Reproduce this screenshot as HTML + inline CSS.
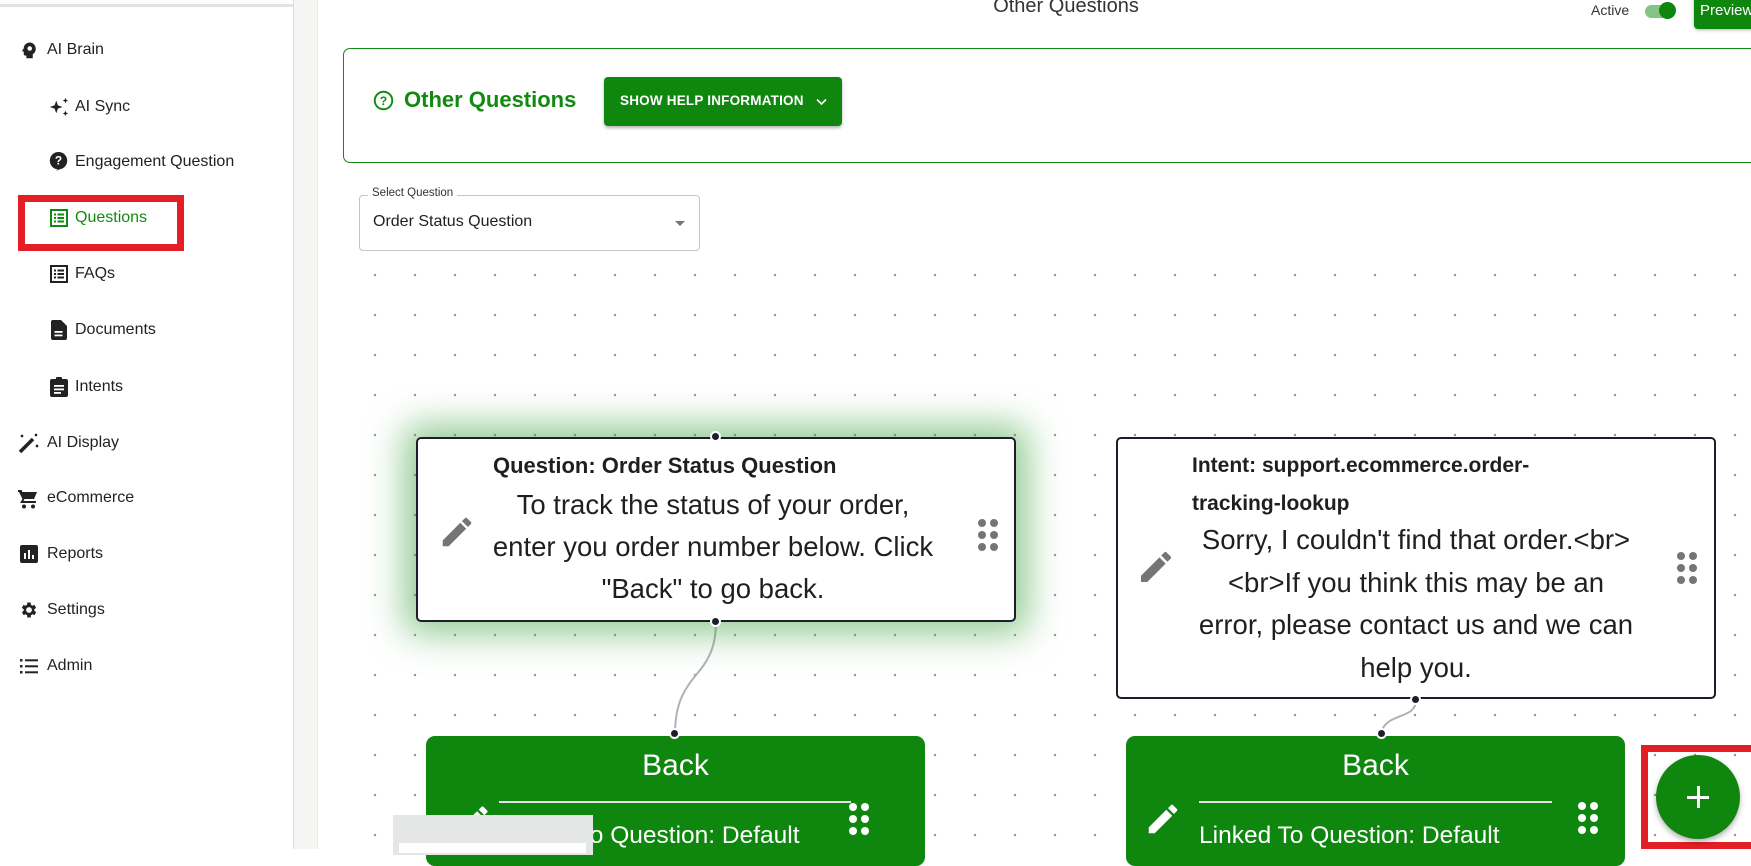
<!DOCTYPE html>
<html><head><meta charset="utf-8"><style>
*{box-sizing:border-box;margin:0;padding:0}
body{width:1751px;height:849px;overflow:hidden;background:#fff;font-family:"Liberation Sans",Arial,sans-serif;color:#1f1f1f;position:relative}
.abs{position:absolute}
#side{left:0;top:0;width:294px;height:849px;background:#fff;border-right:1px solid #ddd}
#gap{left:294px;top:0;width:24px;height:849px;background:#f5f5f4;border-right:1px solid #e8e8e8}
.nav{position:absolute;font-size:16px;color:#222;display:flex;align-items:center;height:20px}
.nav svg{position:absolute}
.grid{left:360px;top:260px;width:1391px;height:589px;background-image:radial-gradient(circle,#999 1.1px,transparent 1.4px);background-size:40px 40px;background-position:-5px -5px}
.node{position:absolute;background:#fff;border:2px solid #1d1d2b;border-radius:5px}
.handle{position:absolute;width:11px;height:11px;border-radius:50%;background:#1d1d2b;border:2px solid #fff}
.gn{position:absolute;background:#0f870f;border-radius:9px;color:#fff}
.dots{position:absolute;display:grid;grid-template-columns:8px 8px;gap:4px 4px}
.dots i{display:block;width:8px;height:8px;border-radius:50%;background:#757575}
.gn .dots i{background:#fff}
</style></head><body>
<div id="side" class="abs">
  <div class="abs" style="left:0;top:4px;width:294px;height:3px;background:#e2e2e2"></div>
</div>
<div id="gap" class="abs"></div>

<!-- nav -->
<div class="nav" style="left:20px;top:40px">
<svg width="18" height="20" viewBox="0 0 24 24" style="left:0;top:0"><path fill="#222" d="M13 2C8.6 2 5.1 5.4 5 9.6L3 12.8c-.3.5 0 1.2.6 1.2H5v3.5c0 1.1.9 2 2 2h1.5V23h8.5v-5.5c2.6-1.3 4-4 4-7 0-4.6-3.4-8.5-8-8.5z"/><circle cx="13" cy="10" r="3" fill="#fff"/></svg>
<span style="margin-left:27px">AI Brain</span></div>
<div class="nav" style="left:48px;top:97px">
<svg width="22" height="22" viewBox="0 0 24 24" style="left:0;top:-1px"><path fill="#222" d="M9 5l1.8 5.2L16 12l-5.2 1.8L9 19l-1.8-5.2L2 12l5.2-1.8zM19 2l.9 2.1L22 5l-2.1.9L19 8l-.9-2.1L16 5l2.1-.9zM19 16l.9 2.1L22 19l-2.1.9L19 22l-.9-2.1L16 19l2.1-.9z"/></svg>
<span style="margin-left:27px">AI Sync</span></div>
<div class="nav" style="left:49px;top:152px">
<svg width="19" height="21" viewBox="0 0 24 26" style="left:0;top:-1px"><circle cx="12" cy="12" r="11" fill="#222"/><path d="M9 25l3-3 3 0z" fill="#222"/><text x="12" y="17" font-size="15" font-weight="bold" fill="#fff" text-anchor="middle" font-family="Liberation Sans">?</text></svg>
<span style="margin-left:26px">Engagement Question</span></div>
<div class="abs" style="left:18px;top:195px;width:166px;height:56px;border:7px solid #e31e24"></div>
<div class="nav" style="left:50px;top:208px;color:#128a12">
<svg width="18" height="18" viewBox="0 0 18 18" style="left:0;top:1px"><rect x="1" y="1" width="16" height="16" fill="none" stroke="#128a12" stroke-width="2"/><rect x="4" y="4.5" width="2" height="2" fill="#128a12"/><rect x="4" y="8" width="2" height="2" fill="#128a12"/><rect x="4" y="11.5" width="2" height="2" fill="#128a12"/><rect x="7.5" y="4.5" width="6.5" height="2" fill="#128a12"/><rect x="7.5" y="8" width="6.5" height="2" fill="#128a12"/><rect x="7.5" y="11.5" width="6.5" height="2" fill="#128a12"/></svg>
<span style="margin-left:25px">Questions</span></div>
<div class="nav" style="left:50px;top:264px">
<svg width="18" height="18" viewBox="0 0 18 18" style="left:0;top:1px"><rect x="1" y="1" width="16" height="16" fill="none" stroke="#222" stroke-width="2"/><rect x="4" y="4.5" width="2" height="2" fill="#222"/><rect x="4" y="8" width="2" height="2" fill="#222"/><rect x="4" y="11.5" width="2" height="2" fill="#222"/><rect x="7.5" y="4.5" width="6.5" height="2" fill="#222"/><rect x="7.5" y="8" width="6.5" height="2" fill="#222"/><rect x="7.5" y="11.5" width="6.5" height="2" fill="#222"/></svg>
<span style="margin-left:25px">FAQs</span></div>
<div class="nav" style="left:51px;top:320px">
<svg width="16" height="20" viewBox="0 0 16 20" style="left:0;top:0"><path fill="#222" d="M2 0h8l6 6v12a2 2 0 0 1-2 2H2a2 2 0 0 1-2-2V2a2 2 0 0 1 2-2z"/><rect x="3.5" y="11" width="8" height="1.8" fill="#fff"/><rect x="3.5" y="14.5" width="8" height="1.8" fill="#fff"/></svg>
<span style="margin-left:24px">Documents</span></div>
<div class="nav" style="left:50px;top:377px">
<svg width="18" height="20" viewBox="0 0 18 20" style="left:0;top:0"><rect x="0" y="2" width="18" height="18" rx="2" fill="#222"/><rect x="6" y="0" width="6" height="4" rx="1" fill="#222"/><rect x="4" y="8" width="10" height="1.8" fill="#fff"/><rect x="4" y="11.5" width="10" height="1.8" fill="#fff"/><rect x="4" y="15" width="7" height="1.8" fill="#fff"/></svg>
<span style="margin-left:25px">Intents</span></div>
<div class="nav" style="left:18px;top:433px">
<svg width="22" height="22" viewBox="0 0 22 22" style="left:0;top:-1px"><path d="M2 20L15 7" stroke="#222" stroke-width="3.5"/><path d="M3 3l2 2M5 3l-2 2M17 2l2 2M19 2l-2 2M18 13l2 2M20 13l-2 2" stroke="#222" stroke-width="1.3"/></svg>
<span style="margin-left:29px">AI Display</span></div>
<div class="nav" style="left:18px;top:488px">
<svg width="20" height="20" viewBox="0 0 20 20" style="left:0;top:1px"><path fill="#222" d="M0 1h3.5l1 2H19l-3 7H6.5L5.5 12H18v2H2l2.5-4L1 3H0z"/><circle cx="6" cy="17.5" r="2" fill="#222"/><circle cx="15" cy="17.5" r="2" fill="#222"/></svg>
<span style="margin-left:29px">eCommerce</span></div>
<div class="nav" style="left:20px;top:544px">
<svg width="18" height="18" viewBox="0 0 18 18" style="left:0;top:1px"><rect width="18" height="18" rx="2" fill="#222"/><rect x="4" y="8" width="2" height="6" fill="#fff"/><rect x="8" y="5" width="2" height="9" fill="#fff"/><rect x="12" y="10" width="2" height="4" fill="#fff"/></svg>
<span style="margin-left:27px">Reports</span></div>
<div class="nav" style="left:19px;top:600px">
<svg width="20" height="20" viewBox="0 0 24 24" style="left:0;top:0"><path fill="#222" d="M19.4 13a7.5 7.5 0 0 0 0-2l2.1-1.6-2-3.5-2.5 1a7.6 7.6 0 0 0-1.7-1L15 3h-4l-.4 2.9a7.6 7.6 0 0 0-1.7 1l-2.5-1-2 3.5L6.6 11a7.5 7.5 0 0 0 0 2l-2.1 1.6 2 3.5 2.5-1a7.6 7.6 0 0 0 1.7 1L11 21h4l.4-2.9a7.6 7.6 0 0 0 1.7-1l2.5 1 2-3.5zM13 15.5a3.5 3.5 0 1 1 0-7 3.5 3.5 0 0 1 0 7z" transform="translate(-1 0)"/></svg>
<span style="margin-left:28px">Settings</span></div>
<div class="nav" style="left:20px;top:656px">
<svg width="18" height="16" viewBox="0 0 18 16" style="left:0;top:2px"><g fill="#222"><rect x="0" y="1" width="2.5" height="2.5"/><rect x="0" y="7" width="2.5" height="2.5"/><rect x="0" y="13" width="2.5" height="2.5"/><rect x="5" y="1.3" width="13" height="2"/><rect x="5" y="7.3" width="13" height="2"/><rect x="5" y="13.3" width="13" height="2"/></g></svg>
<span style="margin-left:27px">Admin</span></div>

<!-- header -->
<div class="abs" style="left:966px;top:-5px;width:200px;text-align:center;font-size:20px;color:#333">Other Questions</div>
<div class="abs" style="left:1591px;top:2px;font-size:14px;color:#333">Active</div>
<div class="abs" style="left:1645px;top:5px;width:28px;height:13px;border-radius:7px;background:#86c486"></div>
<div class="abs" style="left:1659px;top:2px;width:17px;height:17px;border-radius:50%;background:#0f870f"></div>
<div class="abs" style="left:1694px;top:-4px;width:70px;height:33px;border-radius:4px;background:#0f870f;color:#fff;font-size:15px;padding:6px 0 0 6px;box-shadow:0 1px 3px rgba(0,0,0,.3)">Preview</div>

<!-- card -->
<div class="abs" style="left:343px;top:48px;width:1420px;height:115px;border:1.5px solid #128a12;border-radius:7px"></div>
<svg class="abs" style="left:373px;top:90px" width="21" height="21" viewBox="0 0 24 24"><circle cx="12" cy="12" r="10" fill="none" stroke="#128a12" stroke-width="2.2"/><text x="12" y="17" text-anchor="middle" font-size="14" font-weight="bold" fill="#128a12" font-family="Liberation Sans">?</text></svg>
<div class="abs" style="left:404px;top:87px;font-size:22px;font-weight:bold;color:#128a12">Other Questions</div>
<div class="abs" style="left:604px;top:77px;width:238px;height:49px;background:#0f870f;border-radius:4px;box-shadow:0 2px 3px rgba(0,0,0,.3);color:#fff;font-size:13.5px;font-weight:bold;padding:16px 0 0 16px;letter-spacing:.2px">SHOW HELP INFORMATION
<svg class="abs" style="left:212px;top:21px" width="11" height="8" viewBox="0 0 11 8"><path d="M1 1.5l4.5 4.5 4.5-4.5" stroke="#fff" stroke-width="1.6" fill="none"/></svg></div>

<!-- select -->
<div class="abs" style="left:359px;top:195px;width:341px;height:56px;border:1px solid #c4c4c4;border-radius:4px"></div>
<div class="abs" style="left:368px;top:187px;background:#fff;padding:0 4px;font-size:11.5px;color:#333">Select Question</div>
<div class="abs" style="left:373px;top:213px;font-size:16px;color:#1f1f1f">Order Status Question</div>
<div class="abs" style="left:675px;top:221px;width:0;height:0;border-left:5px solid transparent;border-right:5px solid transparent;border-top:5px solid #757575"></div>

<!-- grid -->
<div class="abs grid"></div>

<!-- connectors -->
<svg class="abs" style="left:0;top:0" width="1751" height="849"><path d="M716 622 C716 680 675 670 675 734" stroke="#b1b1b7" stroke-width="2" fill="none"/><path d="M1416 700 C1416 720 1386 712 1381 733" stroke="#b1b1b7" stroke-width="2" fill="none"/></svg>

<!-- node 1 -->
<div class="node" style="left:416px;top:437px;width:600px;height:185px;box-shadow:0 0 35px 12px rgba(60,160,60,.55)">
  <svg class="abs" style="left:20px;top:74px" width="38" height="38" viewBox="0 0 24 24"><path fill="#757575" d="M3 17.25V21h3.75L17.81 9.94l-3.75-3.75L3 17.25zM20.71 7.04a1 1 0 0 0 0-1.41l-2.34-2.34a1 1 0 0 0-1.41 0l-1.83 1.83 3.75 3.75 1.83-1.83z"/></svg>
  <div class="abs" style="left:75px;top:14px;font-size:22px;font-weight:bold;color:#1f1f1f;white-space:nowrap">Question: Order Status Question</div>
  <div class="abs" style="left:60px;top:45px;width:470px;text-align:center;font-size:27.5px;line-height:42px;color:#1f1f1f;white-space:nowrap">To track the status of your order,<br>enter you order number below. Click<br>"Back" to go back.</div>
  <div class="dots" style="left:560px;top:80px"><i></i><i></i><i></i><i></i><i></i><i></i></div>
</div>
<div class="handle" style="left:710px;top:431px"></div>
<div class="handle" style="left:710px;top:616px"></div>

<!-- node 2 -->
<div class="node" style="left:1116px;top:437px;width:600px;height:262px">
  <svg class="abs" style="left:18px;top:108px" width="40" height="40" viewBox="0 0 24 24"><path fill="#757575" d="M3 17.25V21h3.75L17.81 9.94l-3.75-3.75L3 17.25zM20.71 7.04a1 1 0 0 0 0-1.41l-2.34-2.34a1 1 0 0 0-1.41 0l-1.83 1.83 3.75 3.75 1.83-1.83z"/></svg>
  <div class="abs" style="left:74px;top:8px;font-size:21px;font-weight:bold;line-height:38px;color:#1f1f1f;white-space:nowrap">Intent: support.ecommerce.order-<br>tracking-lookup</div>
  <div class="abs" style="left:68px;top:80px;width:460px;text-align:center;font-size:27.5px;line-height:42.5px;color:#1f1f1f;white-space:nowrap">Sorry, I couldn't find that order.&lt;br&gt;<br>&lt;br&gt;If you think this may be an<br>error, please contact us and we can<br>help you.</div>
  <div class="dots" style="left:559px;top:113px"><i></i><i></i><i></i><i></i><i></i><i></i></div>
</div>
<div class="handle" style="left:1410px;top:694px"></div>

<!-- green nodes -->
<div class="gn" style="left:426px;top:736px;width:499px;height:130px">
  <div class="abs" style="left:0;top:13px;width:100%;text-align:center;font-size:30px">Back</div>
  <div class="abs" style="left:73px;top:65px;width:352px;height:2px;background:#e5e5e5"></div>
  <svg class="abs" style="left:30px;top:66px" width="36" height="36" viewBox="0 0 24 24"><path fill="#fff" d="M3 17.25V21h3.75L17.81 9.94l-3.75-3.75L3 17.25zM20.71 7.04a1 1 0 0 0 0-1.41l-2.34-2.34a1 1 0 0 0-1.41 0l-1.83 1.83 3.75 3.75 1.83-1.83z"/></svg>
  <div class="abs" style="left:73px;top:86px;font-size:24.5px;white-space:nowrap">Linked To Question: Default</div>
  <div class="dots" style="left:423px;top:67px"><i></i><i></i><i></i><i></i><i></i><i></i></div>
</div>
<div class="handle" style="left:669px;top:728px"></div>
<div class="gn" style="left:1126px;top:736px;width:499px;height:130px">
  <div class="abs" style="left:0;top:13px;width:100%;text-align:center;font-size:30px">Back</div>
  <div class="abs" style="left:73px;top:65px;width:353px;height:2px;background:#e5e5e5"></div>
  <svg class="abs" style="left:18px;top:64px" width="38" height="38" viewBox="0 0 24 24"><path fill="#fff" d="M3 17.25V21h3.75L17.81 9.94l-3.75-3.75L3 17.25zM20.71 7.04a1 1 0 0 0 0-1.41l-2.34-2.34a1 1 0 0 0-1.41 0l-1.83 1.83 3.75 3.75 1.83-1.83z"/></svg>
  <div class="abs" style="left:73px;top:86px;font-size:24.5px;white-space:nowrap">Linked To Question: Default</div>
  <div class="dots" style="left:452px;top:66px"><i></i><i></i><i></i><i></i><i></i><i></i></div>
</div>
<div class="handle" style="left:1376px;top:728px"></div>

<!-- overlay box -->
<div class="abs" style="left:393px;top:815px;width:200px;height:40px;background:#e5e6e6"></div>
<div class="abs" style="left:399px;top:843px;width:187px;height:10px;background:#fff"></div>

<!-- FAB -->
<div class="abs" style="left:1641px;top:745px;width:110px;height:104px;border:7px solid #e31e24;border-right:none"></div>
<div class="abs" style="left:1656px;top:755px;width:84px;height:84px;border-radius:50%;background:#0f870f;box-shadow:0 3px 6px rgba(0,0,0,.3)"></div>
<div class="abs" style="left:1687px;top:796px;width:22px;height:3px;background:#fff"></div>
<div class="abs" style="left:1697px;top:786px;width:3px;height:22px;background:#fff"></div>
</body></html>
